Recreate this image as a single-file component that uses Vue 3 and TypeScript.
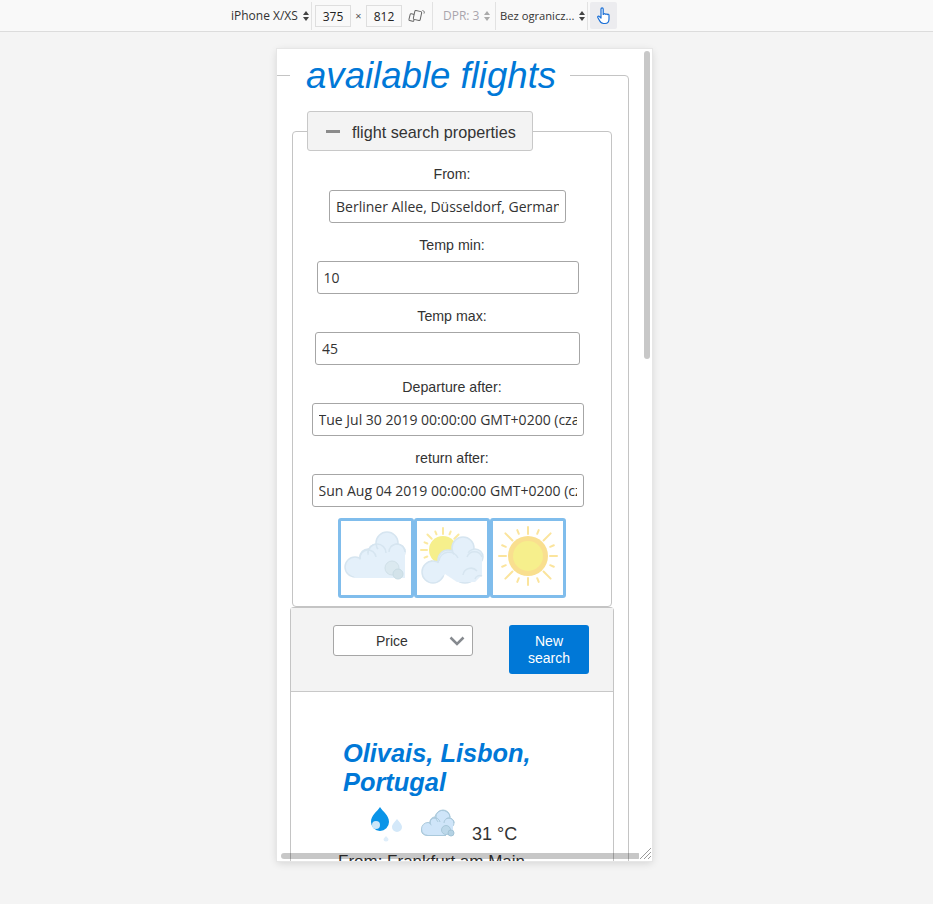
<script setup lang="ts">
interface Field { label: string; value: string; width: number }
const fields: Field[] = [
  { label: 'From:', value: 'Berliner Allee, Düsseldorf, Germany', width: 237 },
  { label: 'Temp min:', value: '10', width: 262 },
  { label: 'Temp max:', value: '45', width: 265 },
  { label: 'Departure after:', value: 'Tue Jul 30 2019 00:00:00 GMT+0200 (czas środkowoeuropejski letni)', width: 272 },
  { label: 'return after:', value: 'Sun Aug 04 2019 00:00:00 GMT+0200 (czas środkowoeuropejski letni)', width: 272 }
]
const rays: number[] = [0, 22.5, 45, 67.5, 90, 112.5, 135, 157.5, 180, 202.5, 225, 247.5, 270, 292.5, 315, 337.5]
function rayStart(i: number): number {
  return i % 4 === 2 ? -32 : i % 2 === 1 ? -28 : -29
}
function rayEnd(i: number): number {
  return i % 2 === 1 ? -24 : -22
}
</script>

<template>
  <div class="page">
    <header class="toolbar">
      <div class="tool device">iPhone X/XS <span class="updown"></span></div>
      <div class="sep"></div>
      <div class="dims">
        <span class="dim">375</span>
        <span class="times">×</span>
        <span class="dim">812</span>
        <svg class="rotate" width="17" height="14" viewBox="0 0 17 14" fill="#f9f9f9" stroke="#666" stroke-width="1">
          <rect x="1.500" y="5" width="5" height="7" rx="1" transform="rotate(14 4 8.500)" />
          <rect x="6" y="2" width="7" height="9" rx="1" transform="rotate(12 9.500 6.500)" />
          <path d="M14.500 1.500 a2 2 0 0 1 1.500 3" fill="none" />
        </svg>
      </div>
      <div class="sep"></div>
      <div class="tool dpr">DPR: 3 <span class="updown muted"></span></div>
      <div class="sep"></div>
      <div class="tool throttle">Bez ogranicz... <span class="updown"></span></div>
      <div class="sep"></div>
      <button class="touch" aria-label="touch">
        <svg width="14" height="18" viewBox="0 0 14 18" fill="#fff" stroke="#1a6fd6" stroke-width="1.200" stroke-linejoin="round">
          <path d="M4 2 a1.100 1.100 0 0 1 2.200 0 V7.500 L7 7 a1 1 0 0 1 1.600 .3 a1 1 0 0 1 1.600 .3 a1 1 0 0 1 1.800 .6 V12 c0 2.500 -1.500 4.500 -4 4.500 H6.500 c-2 0 -3 -1 -4 -3 L.8 10.500 c-.4 -1 .8 -1.800 1.600 -1 L4 11 Z" />
        </svg>
      </button>
    </header>

    <main class="frame">
      <fieldset class="outer">
        <legend class="title">available flights</legend>

        <fieldset class="search">
          <legend class="toggle">
            <span class="minus"></span>
            <span class="toggle-text">flight search properties</span>
          </legend>
          <div v-for="f in fields" :key="f.label" class="field">
            <label class="field-label">{{ f.label }}</label>
            <input class="field-input" :value="f.value" :style="{ width: f.width + 'px' }" />
          </div>
          <div class="weather-row">
            <button class="weather-btn" aria-label="cloudy">
              <svg width="70" height="70" viewBox="0 0 70 70">
                <g fill="#e4f0fa" stroke="#d6e5f0" stroke-width="1.500">
                  <circle cx="14" cy="44" r="10" />
                  <circle cx="27" cy="34" r="8" />
                  <circle cx="36" cy="30" r="9" />
                  <circle cx="46" cy="20" r="11" />
                  <circle cx="56" cy="29" r="8" />
                </g>
                <path d="M6 46 L20 36 L44 22 L64 28 V55 H14 Z" fill="#e4f0fa" />
                <g fill="none" stroke="#d6e5f0" stroke-width="1.500">
                  <path d="M19 36 A8 8 0 0 1 35 34" />
                  <path d="M27 30 A9 9 0 0 1 45 30" />
                  <path d="M48 29 A8 8 0 0 1 64 29" />
                </g>
                <circle cx="51" cy="45" r="7" fill="#dbe9f0" stroke="#d0e0e8" />
                <circle cx="57" cy="51" r="5" fill="#d3e3ea" stroke="#c8dce4" />
              </svg>
            </button>
            <button class="weather-btn" aria-label="partly cloudy">
              <svg width="70" height="70" viewBox="0 0 70 70">
                <g stroke="#fbe9a0" stroke-width="2" stroke-linecap="round">
                  <line
                    v-for="(a, i) in rays"
                    :key="a"
                    x1="26"
                    :y1="27 + (i % 2 ? -20 : -22)"
                    x2="26"
                    :y2="27 + (i % 2 ? -17 : -16)"
                    :transform="`rotate(${a} 26 27)`"
                  />
                </g>
                <circle cx="26" cy="27" r="14" fill="#f6ef8c" />
                <g fill="#e4f0fa" stroke="#d6e5f0" stroke-width="1.500">
                  <circle cx="16" cy="49" r="11" />
                  <circle cx="31" cy="37" r="10" />
                  <circle cx="46" cy="25" r="11" />
                  <circle cx="58" cy="34" r="8" />
                  <circle cx="48" cy="47" r="13" />
                </g>
                <path d="M8 50 L24 38 L44 28 L65 33 V52 L58 59 H40 L28 51 L20 58 Z" fill="#e4f0fa" />
                <g fill="none" stroke="#d6e5f0" stroke-width="1.500">
                  <path d="M22 38 A10 10 0 0 1 41 35" />
                  <path d="M50 34 A8 8 0 0 1 65 34" />
                  <path d="M46 52 A8 8 0 0 1 60 48" />
                  <path d="M58 56 A5 5 0 0 1 65 53" />
                </g>
              </svg>
            </button>
            <button class="weather-btn" aria-label="sunny">
              <svg width="70" height="70" viewBox="0 0 70 70">
                <g stroke="#fbe49c" stroke-width="2" stroke-linecap="round">
                  <line
                    v-for="(a, i) in rays"
                    :key="a"
                    x1="35"
                    :y1="33 + rayStart(i)"
                    x2="35"
                    :y2="33 + rayEnd(i)"
                    :transform="`rotate(${a} 35 33)`"
                  />
                </g>
                <circle cx="35" cy="33" r="20" fill="#f9df8f" />
                <circle cx="35" cy="33" r="15" fill="#f6ef8c" />
              </svg>
            </button>
          </div>
        </fieldset>

        <section class="results">
          <div class="sort-bar">
            <div class="sort-select">
              <span class="sort-text">Price</span>
              <svg width="16" height="10" viewBox="0 0 16 10" fill="none" stroke="#868a8f" stroke-width="2.500">
                <path d="M1.500 1.500 L8 8 L14.500 1.500" />
              </svg>
            </div>
            <button class="new-search">New search</button>
          </div>
          <article class="card">
            <h2 class="place">Olivais, Lisbon, Portugal</h2>
            <div class="conditions">
              <svg class="drops" width="36" height="36" viewBox="0 0 36 36">
                <path d="M11 1 C14 6 20 9 20 16 A9 9 0 0 1 2 16 C2 9 8 6 11 1 Z" fill="#0a94e8" />
                <circle cx="7" cy="19" r="4" fill="#cde6f8" />
                <path d="M28 13 C30 16 33 18 33 21 A5 5 0 0 1 23 21 C23 18 26 16 28 13 Z" fill="#d3e8f9" />
                <path d="M17 30 L19.500 33 A2.500 2.500 0 0 1 14.500 33 Z" fill="#dfeefa" />
              </svg>
              <svg class="cloud" width="36" height="30" viewBox="0 0 36 30">
                <g fill="#cfe5f9" stroke="#aac9dc" stroke-width="1">
                  <circle cx="8" cy="20" r="6.500" />
                  <circle cx="15" cy="13" r="5" />
                  <circle cx="23" cy="8" r="7" />
                  <circle cx="29" cy="14" r="5" />
                </g>
                <path d="M3 21 L14 15 L25 9 L33 14 V26 H8 Z" fill="#cfe5f9" />
                <path d="M1.500 20 V22 Q2 26.500 8 26.500 H26" fill="none" stroke="#aac9dc" stroke-width="1" />
                <path d="M10 15 A5 5 0 0 1 20 13 M15 10 A7 7 0 0 1 30 8 M24 14 A5 5 0 0 1 34 14" fill="none" stroke="#aac9dc" stroke-width="1" />
                <circle cx="26" cy="21" r="4.500" fill="#bcd8ea" stroke="#a8c8da" />
                <circle cx="31" cy="24" r="3" fill="#b4d2e4" stroke="#a2c3d6" />
              </svg>
              <span class="temp">31 °C</span>
            </div>
            <p class="from">From: Frankfurt am Main</p>
          </article>
        </section>
      </fieldset>

      <div class="scroll-v"></div>
      <div class="scroll-h"></div>
      <svg class="resize" width="13" height="13" viewBox="0 0 13 13" stroke="#9a9a9a" stroke-width="1">
        <path d="M1 12 L12 1 M5 12 L12 5 M9 12 L12 9" />
      </svg>
    </main>
  </div>
</template>

<style>
html, body { margin: 0; background: #f4f4f4; }
</style>

<style scoped>
.page {
  width: 933px;
  height: 904px;
  overflow: hidden;
  background: #f4f4f4;
  font-family: "Liberation Sans", Arial, sans-serif;
}
.toolbar {
  height: 31px;
  display: flex;
  align-items: center;
  padding-left: 231px;
  background: #f9f9f9;
  border-bottom: 1px solid #dcdcdc;
  font-family: "Open Sans", sans-serif;
  font-size: 12px;
  color: #333;
  box-sizing: content-box;
}
.tool { display: flex; align-items: center; white-space: nowrap; }
.device { width: 78px; gap: 5px; }
.dpr { width: 50px; margin-left: 8px; color: #a9a5ad; gap: 5px; }
.throttle { width: 85px; margin-left: 2px; gap: 5px; font-size: 11.200px; }
.sep { width: 1px; height: 28px; background: #e2e2e2; margin: 0 2px; }
.updown { position: relative; width: 6px; height: 10px; flex: none; }
.updown::before, .updown::after {
  content: "";
  position: absolute;
  left: 0;
  border-left: 3px solid transparent;
  border-right: 3px solid transparent;
}
.updown::before { top: 0; border-bottom: 4px solid #444; }
.updown::after { bottom: 0; border-top: 4px solid #444; }
.updown.muted::before { border-bottom-color: #aaa; }
.updown.muted::after { border-top-color: #aaa; }
.dims { display: flex; align-items: center; width: 115px; padding-left: 1px; }
.dim {
  width: 34px;
  height: 20px;
  line-height: 22px;
  text-align: center;
  border: 1px solid #dedede;
  color: #222;
}
.times { width: 15px; text-align: center; color: #555; font-size: 11px; }
.rotate { margin-left: 6px; }
.touch {
  width: 27px;
  height: 27px;
  padding: 0;
  border: 0;
  border-radius: 2px;
  background: #ececef;
  display: flex;
  align-items: center;
  justify-content: center;
}
.frame {
  position: relative;
  width: 375px;
  height: 812px;
  margin: 17px 0 0 277px;
  overflow: hidden;
  background: #fff;
  box-shadow: 0 0 0 1px #e6e6e6, 0 2px 8px rgba(0, 0, 0, 0.14);
}
.outer {
  box-sizing: border-box;
  width: 363px;
  margin: 6px 0 0 -11px;
  padding: 0 0 0 25px;
  border: 1px solid #c4c4c4;
  border-radius: 4px;
  min-inline-size: 0;
  height: 900px;
}
.title {
  margin-left: -2px;
  padding: 0 14px 0 16px;
  font-size: 36.600px;
  font-style: italic;
  color: #0078d7;
  line-height: 41px;
}
.search {
  box-sizing: border-box;
  width: 320px;
  margin: 15px 0 0 0;
  padding: 14px 0 0;
  border: 1px solid #c4c4c4;
  border-radius: 4px;
  min-inline-size: 0;
  height: 496px;
}
.toggle {
  box-sizing: border-box;
  width: 226px;
  height: 40px;
  margin-left: 14px;
  padding: 0 0 0 18px;
  display: flex;
  align-items: center;
  gap: 12px;
  background: #f3f3f3;
  border: 1px solid #c8c8c8;
  border-radius: 3px;
  font-size: 16.200px;
  color: #333;
}
.toggle-text { padding-top: 3px; }
.minus { width: 14px; height: 3px; background: #8b8b8b; flex: none; }
.field {
  display: flex;
  flex-direction: column;
  align-items: center;
  height: 71px;
}
.field-label {
  height: 16px;
  line-height: 16px;
  margin: 1px 0 8px;
  font-size: 14.200px;
  color: #333;
}
.field-input {
  box-sizing: border-box;
  height: 33px;
  margin-right: 9px;
  padding: 0 6px;
  border: 1px solid #a6a6a6;
  border-radius: 3px;
  background: #fff;
  font-family: "Open Sans", sans-serif;
  font-size: 14px;
  color: #333;
  outline: none;
}
.weather-row {
  display: flex;
  justify-content: center;
  margin-top: -2px;
}
.weather-btn {
  box-sizing: border-box;
  width: 76px;
  height: 80px;
  padding: 0;
  background: #fff;
  border: 3px solid #80bdec;
  border-radius: 3px;
  display: flex;
  align-items: center;
  justify-content: center;
}
.results {
  box-sizing: border-box;
  width: 324px;
  margin-left: -2px;
  border: 1px solid #c4c4c4;
  border-bottom: 0;
  border-radius: 4px 4px 0 0;
  height: 400px;
}
.sort-bar {
  box-sizing: border-box;
  height: 84px;
  display: flex;
  align-items: flex-start;
  padding: 17px 0 0 42px;
  background: #f3f3f3;
  border-bottom: 1px solid #c8c8c8;
}
.sort-select {
  box-sizing: border-box;
  width: 140px;
  height: 31px;
  display: flex;
  align-items: center;
  justify-content: space-between;
  padding: 0 7px 0 42px;
  background: #fff;
  border: 1px solid #a6a6a6;
  border-radius: 3px;
  font-size: 14px;
  color: #333;
}
.new-search {
  box-sizing: border-box;
  width: 80px;
  height: 49px;
  margin-left: 36px;
  padding: 0 12px;
  border: 0;
  border-radius: 3px;
  background: #0078d7;
  color: #fff;
  font-family: inherit;
  font-size: 14px;
  line-height: 17px;
}
.card { padding: 47px 0 0 52px; }
.place {
  width: 220px;
  margin: 0;
  font-size: 25.400px;
  line-height: 29px;
  font-style: italic;
  font-weight: 700;
  color: #0078d7;
}
.conditions {
  display: flex;
  align-items: flex-end;
  margin: 8px 0 0 26px;
  height: 37px;
}
.cloud { margin: 0 0 3px 15px; }
.temp { margin: 0 0 -3px 16px; font-size: 18px; color: #333; }
.from { margin: 10px 0 0 -5px; font-size: 17px; color: #333; }
.scroll-v {
  position: absolute;
  top: 2px;
  left: 367px;
  width: 6px;
  height: 308px;
  border-radius: 3px;
  background: #c8c8c8;
}
.scroll-h {
  position: absolute;
  left: 4px;
  top: 804px;
  width: 360px;
  height: 6px;
  border-radius: 3px;
  background: rgba(0, 0, 0, 0.22);
}
.resize { position: absolute; right: 0; bottom: 1px; background: #fff; }
</style>
